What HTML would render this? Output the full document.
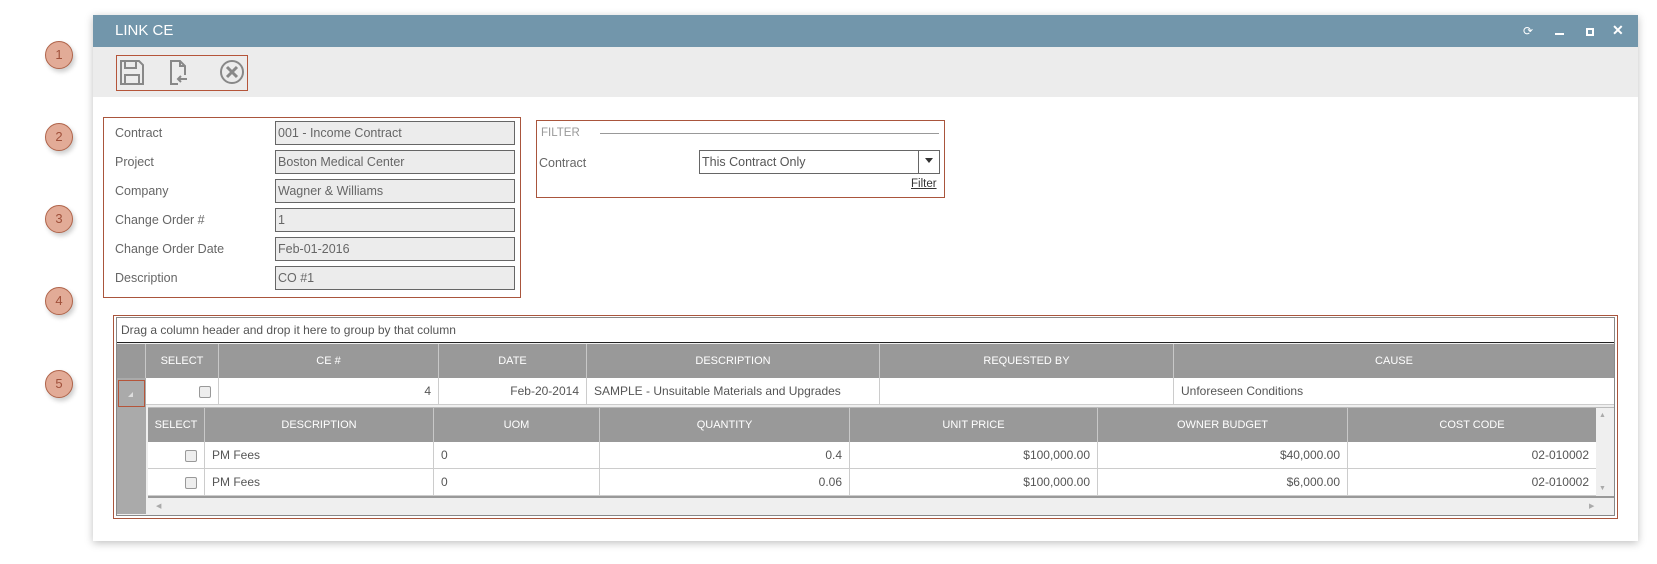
<!DOCTYPE html>
<html><head><meta charset="utf-8"><style>
*{box-sizing:border-box;margin:0;padding:0}
body{width:1657px;height:564px;background:#fff;font-family:"Liberation Sans",sans-serif;position:relative;overflow:hidden;color:#555}
.a{position:absolute}
.circ{position:absolute;width:28px;height:28px;border-radius:50%;background:#e2ab97;border:1.5px solid #b0644a;color:#a0503a;font-size:13px;text-align:center;line-height:25px;box-shadow:2px 3px 5px rgba(0,0,0,.2)}
.lbl{position:absolute;left:115px;font-size:12.5px;color:#666}
.inp{position:absolute;left:275px;width:240px;height:24px;background:#ececec;border:1.5px solid #666;font-size:12.5px;color:#666;padding-left:2px;line-height:22px}
.hd{position:absolute;background:#999;color:#fff;font-size:11px;text-align:center;border-right:1px solid #c8c8c8}
.cl{position:absolute;background:#fff;font-size:12px;color:#555;border-right:1px solid #ccc;border-bottom:1px solid #ccc;padding:0 7px;line-height:26px;white-space:nowrap}
.r{text-align:right}
.cb{display:inline-block;width:12px;height:12px;border:1px solid #999;border-radius:2px;background:#eee;vertical-align:middle}
</style></head><body>
<div class="a" style="left:93px;top:15px;width:1545px;height:526px;background:#fff;box-shadow:0 2px 8px rgba(0,0,0,.25)"></div>
<div class="a" style="left:93px;top:15px;width:1545px;height:32px;background:#7296ab;color:#fff;font-size:15px;line-height:32px;padding-left:22px">LINK CE</div>
<div class="a" style="left:1523px;top:24px;color:#fff;font-size:12px">⟳</div>
<div class="a" style="left:1555px;top:33px;width:9px;height:2px;background:#fff"></div>
<div class="a" style="left:1586px;top:28px;width:8px;height:8px;border:2px solid #fff"></div>
<div class="a" style="left:1612px;top:22px;color:#fff;font-size:14px;font-weight:bold">✕</div>
<div class="a" style="left:93px;top:47px;width:1545px;height:50px;background:#ececec"></div>
<div class="a" style="left:116px;top:55px;width:132px;height:36px;border:1.5px solid #b5553a"></div>
<svg class="a" style="left:120px;top:59px" width="125" height="27" viewBox="0 0 125 27" fill="none" stroke="#888" stroke-width="2">
<path d="M1 2h18l4 4v19H1z M5 2v7h11V2 M5 25v-9h14v9"/>
<path d="M58 25H51V2h9l5 5v9 M60 2v5h5 M67 20h-9 M61 17l-3 3 3 3"/>
<circle cx="112" cy="13" r="11"/><path d="M107 8l10 10M117 8l-10 10" stroke-width="3"/>
</svg>
<div class="circ" style="left:45px;top:41px">1</div>
<div class="circ" style="left:45px;top:123px">2</div>
<div class="circ" style="left:45px;top:205px">3</div>
<div class="circ" style="left:45px;top:287px">4</div>
<div class="circ" style="left:45px;top:370px">5</div>

<div class="a" style="left:103px;top:117px;width:418px;height:181px;border:1.5px solid #a9553c"></div>
<div class="lbl" style="top:126px">Contract</div><div class="inp" style="top:121px">001 - Income Contract</div>
<div class="lbl" style="top:155px">Project</div><div class="inp" style="top:150px">Boston Medical Center</div>
<div class="lbl" style="top:184px">Company</div><div class="inp" style="top:179px">Wagner &amp; Williams</div>
<div class="lbl" style="top:213px">Change Order #</div><div class="inp" style="top:208px">1</div>
<div class="lbl" style="top:242px">Change Order Date</div><div class="inp" style="top:237px">Feb-01-2016</div>
<div class="lbl" style="top:271px">Description</div><div class="inp" style="top:266px">CO #1</div>

<div class="a" style="left:536px;top:120px;width:409px;height:78px;border:1.5px solid #a9553c"></div>
<div class="a" style="left:541px;top:127px;font-size:11.5px;color:#999">FILTER</div>
<div class="a" style="left:600px;top:133px;width:339px;height:1px;background:#999"></div>
<div class="a" style="left:539px;top:156px;font-size:12.5px;color:#666">Contract</div>
<div class="a" style="left:699px;top:150px;width:241px;height:24px;border:1.5px solid #666;font-size:12.5px;color:#555;padding-left:2px;line-height:22px">This Contract Only</div>
<div class="a" style="left:918px;top:151px;width:1px;height:22px;background:#666"></div>
<div class="a" style="left:925px;top:158px;width:0;height:0;border-left:4px solid transparent;border-right:4px solid transparent;border-top:5px solid #333"></div>
<div class="a" style="left:911px;top:178px;font-size:11.5px;color:#333;text-decoration:underline">Filter</div>

<div class="a" style="left:113px;top:315px;width:1505px;height:204px;border:1.5px solid #a9553c"></div>
<div class="a" style="left:116px;top:317px;width:1499px;height:199px;border:1px solid #888;background:#efefef"></div>
<div class="a" style="left:117px;top:318px;width:1497px;height:25px;background:#fff;border-bottom:1.5px solid #222;font-size:12px;line-height:24px;padding-left:4px;color:#555">Drag a column header and drop it here to group by that column</div>
<div class="hd" style="left:117px;top:344px;width:29px;height:34px"></div>
<div class="hd" style="left:146px;top:344px;width:73px;height:34px;line-height:34px">SELECT</div>
<div class="hd" style="left:219px;top:344px;width:220px;height:34px;line-height:34px">CE #</div>
<div class="hd" style="left:439px;top:344px;width:148px;height:34px;line-height:34px">DATE</div>
<div class="hd" style="left:587px;top:344px;width:293px;height:34px;line-height:34px">DESCRIPTION</div>
<div class="hd" style="left:880px;top:344px;width:294px;height:34px;line-height:34px">REQUESTED BY</div>
<div class="hd" style="left:1174px;top:344px;width:440px;height:34px;line-height:34px;border-right:0">CAUSE</div>
<div class="a" style="left:117px;top:378px;width:29px;height:136px;background:#aaa"></div>
<div class="a" style="left:118px;top:380px;width:27px;height:27px;border:1.5px solid #b5553a"></div>
<div class="a" style="left:128px;top:392px;width:0;height:0;border-left:5px solid transparent;border-bottom:5px solid #ddd"></div>
<div class="cl r" style="left:146px;top:378px;width:73px;height:27px"><span class="cb"></span></div>
<div class="cl r" style="left:219px;top:378px;width:220px;height:27px">4</div>
<div class="cl r" style="left:439px;top:378px;width:148px;height:27px">Feb-20-2014</div>
<div class="cl" style="left:587px;top:378px;width:293px;height:27px">SAMPLE - Unsuitable Materials and Upgrades</div>
<div class="cl" style="left:880px;top:378px;width:294px;height:27px"></div>
<div class="cl" style="left:1174px;top:378px;width:440px;height:27px;border-right:0">Unforeseen Conditions</div>

<div class="a" style="left:148px;top:407px;width:1466px;height:107px;background:#efefef;border-top:1px solid #bbb"></div>
<div class="hd" style="left:148px;top:408px;width:57px;height:34px;line-height:34px">SELECT</div>
<div class="hd" style="left:205px;top:408px;width:229px;height:34px;line-height:34px">DESCRIPTION</div>
<div class="hd" style="left:434px;top:408px;width:166px;height:34px;line-height:34px">UOM</div>
<div class="hd" style="left:600px;top:408px;width:250px;height:34px;line-height:34px">QUANTITY</div>
<div class="hd" style="left:850px;top:408px;width:248px;height:34px;line-height:34px">UNIT PRICE</div>
<div class="hd" style="left:1098px;top:408px;width:250px;height:34px;line-height:34px">OWNER BUDGET</div>
<div class="hd" style="left:1348px;top:408px;width:248px;height:34px;line-height:34px;border-right:0">COST CODE</div>
<div class="cl r" style="left:148px;top:442px;width:57px;height:27px"><span class="cb"></span></div>
<div class="cl" style="left:205px;top:442px;width:229px;height:27px">PM Fees</div>
<div class="cl" style="left:434px;top:442px;width:166px;height:27px">0</div>
<div class="cl r" style="left:600px;top:442px;width:250px;height:27px">0.4</div>
<div class="cl r" style="left:850px;top:442px;width:248px;height:27px">$100,000.00</div>
<div class="cl r" style="left:1098px;top:442px;width:250px;height:27px">$40,000.00</div>
<div class="cl r" style="left:1348px;top:442px;width:248px;height:27px;border-right:0">02-010002</div>
<div class="cl r" style="left:148px;top:469px;width:57px;height:27px"><span class="cb"></span></div>
<div class="cl" style="left:205px;top:469px;width:229px;height:27px">PM Fees</div>
<div class="cl" style="left:434px;top:469px;width:166px;height:27px">0</div>
<div class="cl r" style="left:600px;top:469px;width:250px;height:27px">0.06</div>
<div class="cl r" style="left:850px;top:469px;width:248px;height:27px">$100,000.00</div>
<div class="cl r" style="left:1098px;top:469px;width:250px;height:27px">$6,000.00</div>
<div class="cl r" style="left:1348px;top:469px;width:248px;height:27px;border-right:0">02-010002</div>
<div class="a" style="left:148px;top:496px;width:1466px;height:1.5px;background:#999"></div>
<div class="a" style="left:1599px;top:412px;font-size:7px;color:#aaa">▲</div>
<div class="a" style="left:1599px;top:485px;font-size:7px;color:#aaa">▼</div>
<div class="a" style="left:156px;top:502px;font-size:7px;color:#aaa">◀</div>
<div class="a" style="left:1589px;top:502px;font-size:7px;color:#aaa">▶</div>
</body></html>
